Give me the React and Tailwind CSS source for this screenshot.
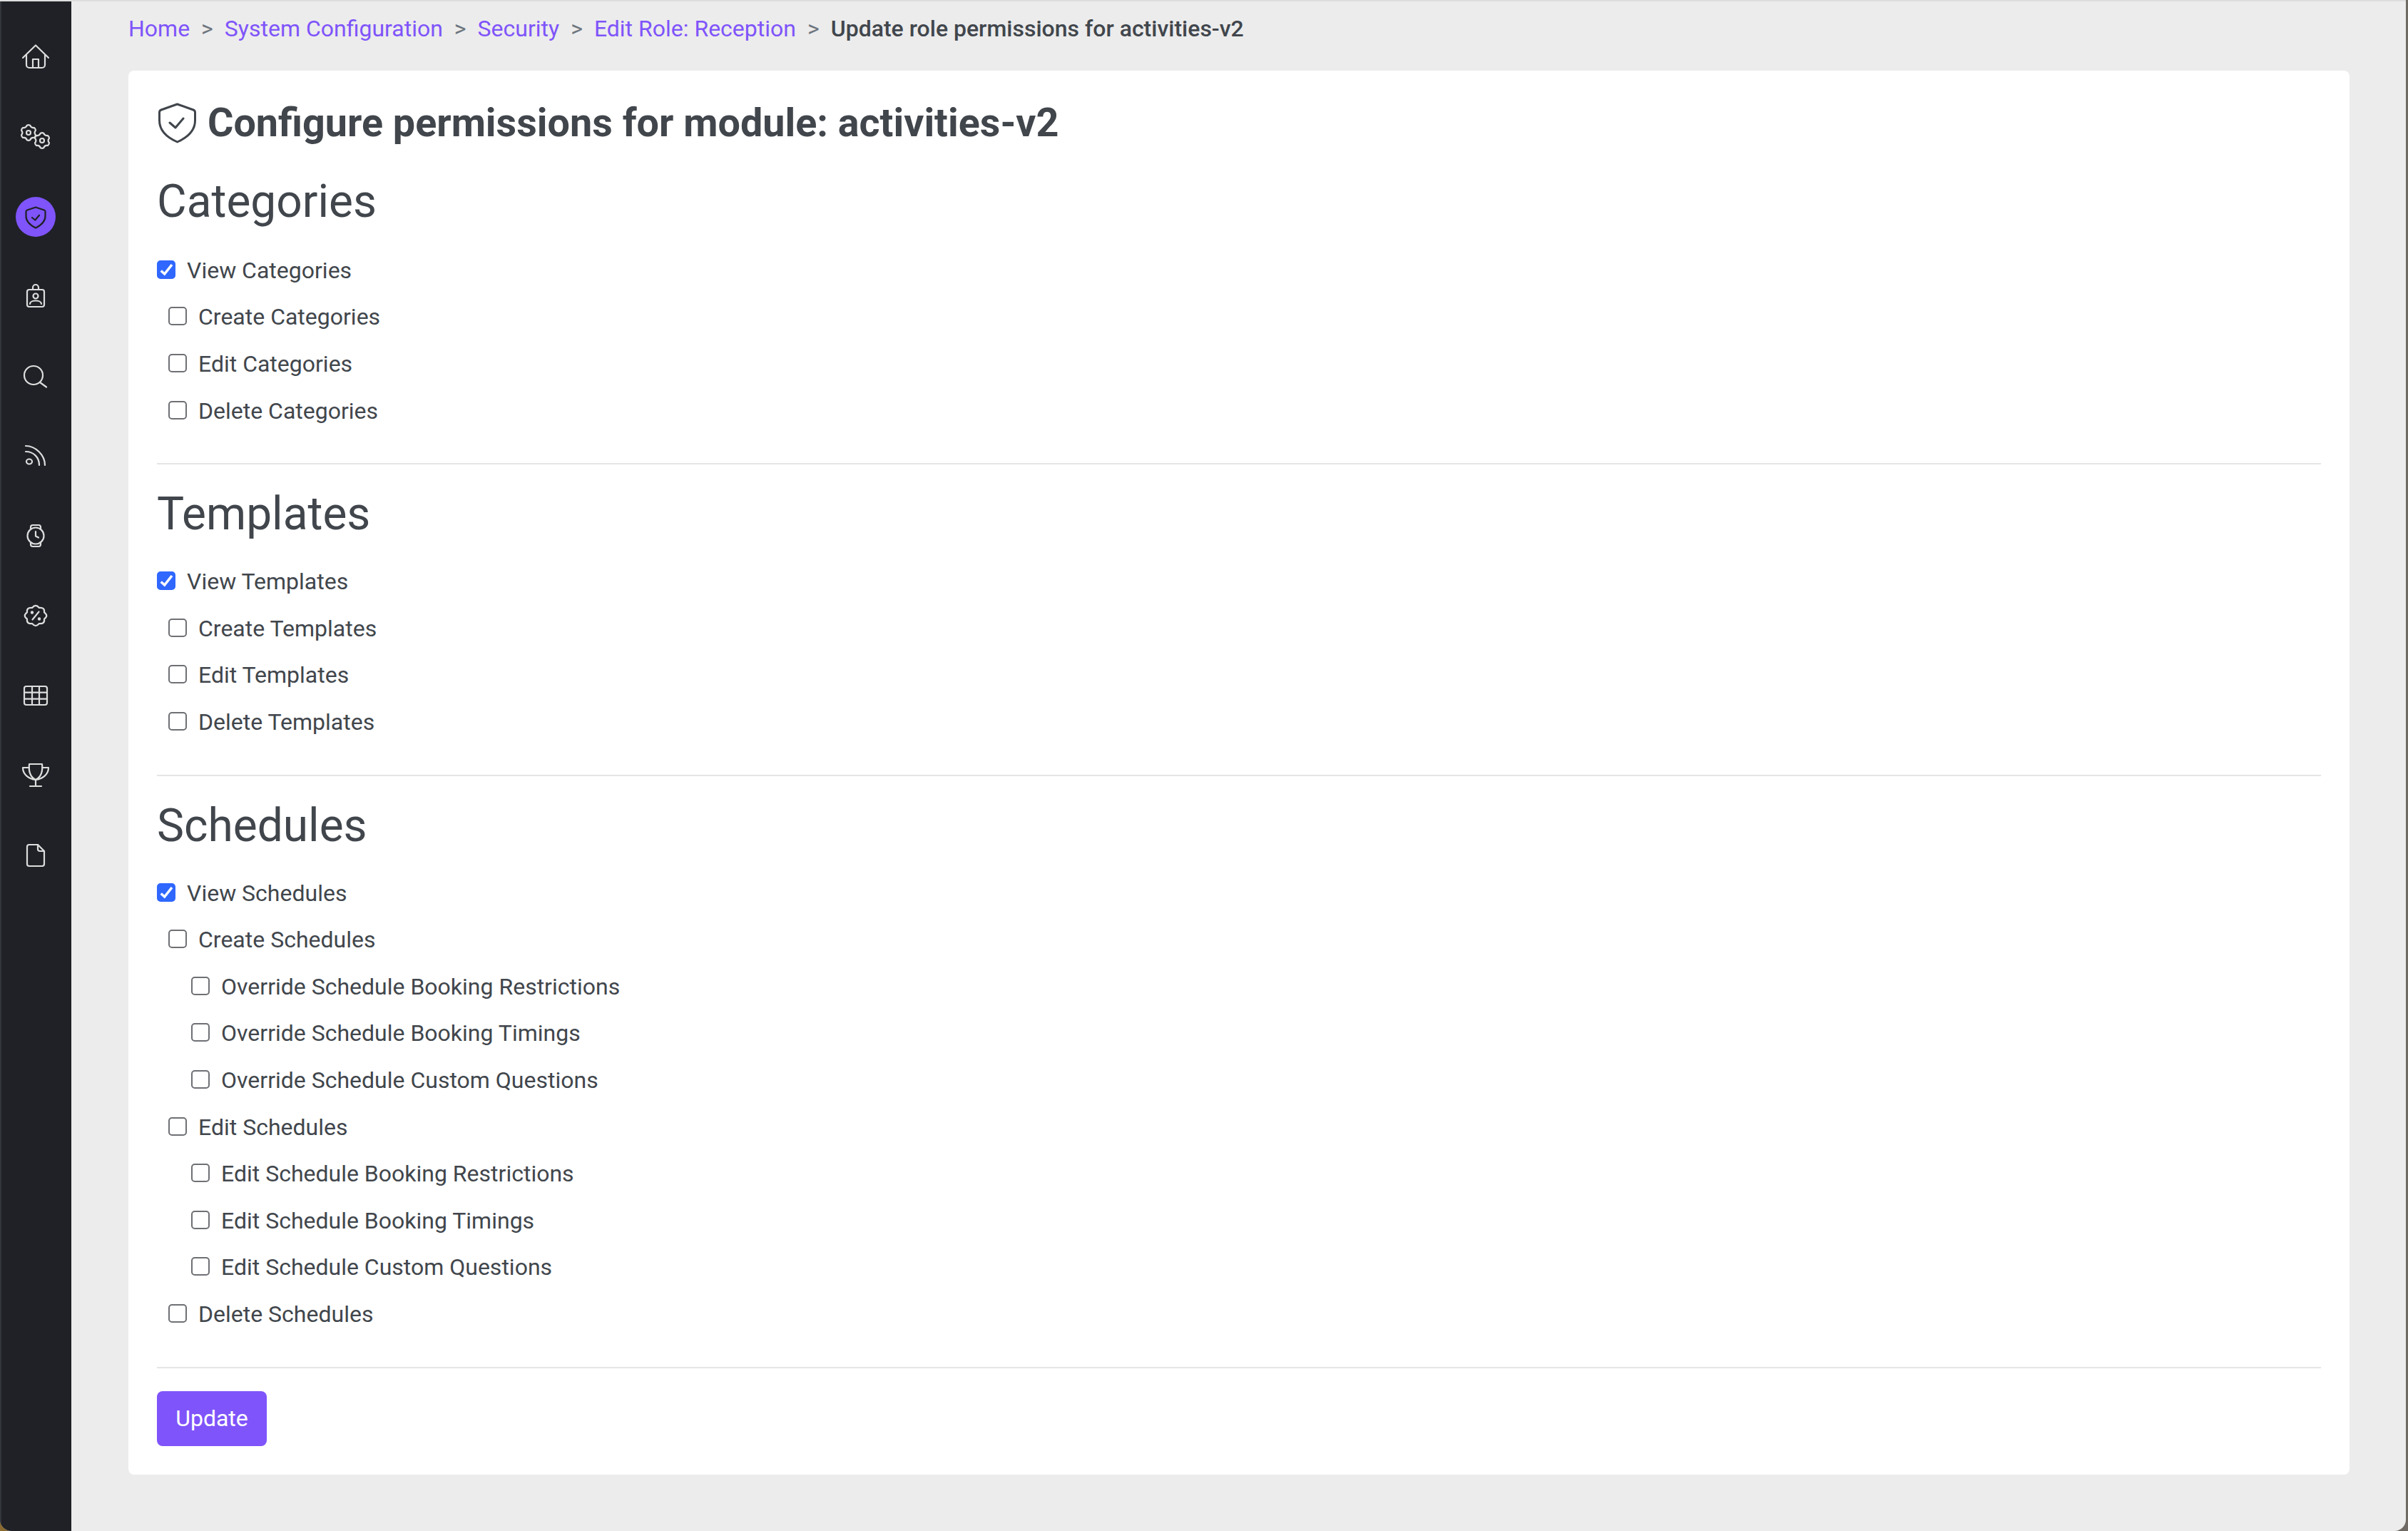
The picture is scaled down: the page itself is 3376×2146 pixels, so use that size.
import React from "react";

const gearPath = (cx, cy, r1, r2, teeth) => {
  const pts = [];
  const step = (Math.PI * 2) / teeth;
  for (let i = 0; i < teeth; i++) {
    const a = i * step - Math.PI / 2;
    const p = (ang, r) => `${(cx + Math.cos(ang) * r).toFixed(2)} ${(cy + Math.sin(ang) * r).toFixed(2)}`;
    pts.push(`${i === 0 ? "M" : "L"}${p(a - step * 0.2, r2)}`);
    pts.push(`Q${p(a, r2 + 0.8)} ${p(a + step * 0.2, r2)}`);
    pts.push(`Q${p(a + step * 0.5, r1 - 0.8)} ${p(a + step * 0.8, r2)}`);
  }
  return pts.join(" ") + " Z";
};

const scallopPath = (cx, cy, r, lobes) => {
  const parts = [];
  const step = (Math.PI * 2) / lobes;
  const p = (ang, rad) => `${(cx + Math.cos(ang) * rad).toFixed(2)} ${(cy + Math.sin(ang) * rad * 0.92).toFixed(2)}`;
  for (let i = 0; i < lobes; i++) {
    const a = i * step - Math.PI / 2 - step / 2;
    if (i === 0) parts.push(`M${p(a, r - 2.5)}`);
    parts.push(`Q${p(a + step / 2, r + 3)} ${p(a + step, r - 2.5)}`);
  }
  return parts.join(" ") + " Z";
};

const ICONS = [
  <>
    <path d="M6 25 L24 7.5 L42 25" />
    <path d="M11 21 V35 a4 4 0 0 0 4 4 H33 a4 4 0 0 0 4 -4 V21" />
    <path d="M20 39 V27 H28 V39" />
  </>,
  <>
    <path d={gearPath(14, 18, 8, 10.5, 6)} />
    <circle cx="14" cy="18" r="3" />
    <path d={gearPath(33, 29, 8, 10.5, 6)} />
    <circle cx="33" cy="29" r="3" />
  </>,
  null,
  <>
    <path d="M20 14 H15 a3 3 0 0 0 -3 3 V35 a3 3 0 0 0 3 3 H33 a3 3 0 0 0 3 -3 V17 a3 3 0 0 0 -3 -3 H28" />
    <path d="M20 14 V11 a4 4 0 0 1 8 0 V14 Z" />
    <circle cx="24" cy="23" r="3.5" />
    <path d="M16 34 C16 28 32 28 32 34" />
  </>,
  <>
    <circle cx="21" cy="22" r="13" />
    <path d="M30 32 L39 38.5" />
  </>,
  <>
    <ellipse cx="15" cy="31" rx="4" ry="3.5" />
    <path d="M10 9 C24 9 37 22 37 36" />
    <path d="M10 17 C21 17 29 25 29 36" />
  </>,
  <>
    <circle cx="24" cy="23" r="11.5" />
    <path d="M17 13 V11 a3 3 0 0 1 3 -3 H28 a3 3 0 0 1 3 3 V13" />
    <path d="M17 33 V35 a3 3 0 0 0 3 3 H28 a3 3 0 0 0 3 -3 V33" />
    <path d="M24 17 V23.5 L28 25.5" />
  </>,
  <>
    <path d={scallopPath(24, 23, 15.5, 8)} />
    <path d="M19.5 28.5 L28.5 17.5" />
    <circle cx="19" cy="18.5" r="1.1" fill="#dddddd" />
    <circle cx="29" cy="27.5" r="1.1" fill="#dddddd" />
  </>,
  <>
    <rect x="8" y="10" width="32" height="26" rx="3" />
    <path d="M19 10 V36 M29 10 V36 M8 18.6 H40 M8 27.6 H40" />
  </>,
  <>
    <path d="M15 7 H33 C34 16 32 25 24 29 C16 25 14 16 15 7 Z" />
    <path d="M15 12 H6 C6 22 15 28 24 29 C33 28 42 22 42 12 H33" />
    <path d="M24 29 V38 M16 38 H32" />
  </>,
  <>
    <path d="M15 8 H27 L36 17 V35 a3 3 0 0 1 -3 3 H15 a3 3 0 0 1 -3 -3 V11 a3 3 0 0 1 3 -3 Z" />
    <path d="M27 8 V14 a3 3 0 0 0 3 3 H36" />
  </>,
];

const BREADCRUMB = ["Home", "System Configuration", "Security", "Edit Role: Reception"];

const SECTIONS = [
  {
    title: "Categories",
    rows: [
      ["View Categories", 0, true],
      ["Create Categories", 1],
      ["Edit Categories", 1],
      ["Delete Categories", 1],
    ],
  },
  {
    title: "Templates",
    rows: [
      ["View Templates", 0, true],
      ["Create Templates", 1],
      ["Edit Templates", 1],
      ["Delete Templates", 1],
    ],
  },
  {
    title: "Schedules",
    rows: [
      ["View Schedules", 0, true],
      ["Create Schedules", 1],
      ["Override Schedule Booking Restrictions", 2],
      ["Override Schedule Booking Timings", 2],
      ["Override Schedule Custom Questions", 2],
      ["Edit Schedules", 1],
      ["Edit Schedule Booking Restrictions", 2],
      ["Edit Schedule Booking Timings", 2],
      ["Edit Schedule Custom Questions", 2],
      ["Delete Schedules", 1],
    ],
  },
];

function Sidebar() {
  return (
    <aside className="w-[100px] shrink-0 bg-[#1f2126] border-l-2 border-[#33363b] flex flex-col items-center pt-[22px]">
      {ICONS.map((icon, i) => (
        <div key={i} className="h-[112px] w-full flex items-center justify-center -ml-[2px]">
          {icon ? (
            <svg width="48" height="48" viewBox="0 0 48 48" fill="none" stroke="#dddddd" strokeWidth="2.2" strokeLinecap="round" strokeLinejoin="round">
              {icon}
            </svg>
          ) : (
            <div className="w-[56px] h-[56px] rounded-full bg-[#7f54fa] flex items-center justify-center">
              <svg width="48" height="48" viewBox="0 0 48 48" fill="none" stroke="#1f2126" strokeWidth="2.2" strokeLinecap="round" strokeLinejoin="round">
                <path d="M24 10.5 L36 14.5 Q37.5 15 37.5 16.5 V23 C37.5 31 31 36 24 39.5 C17 36 10.5 31 10.5 23 V16.5 Q10.5 15 12 14.5 Z" />
                <path d="M19 25 L23.3 28.5 L29 21.7" />
              </svg>
            </div>
          )}
        </div>
      ))}
    </aside>
  );
}

function Row({ label, level, checked }) {
  const indent = level === 0 ? "pl-0" : level === 1 ? "pl-[16px]" : "pl-[48px]";
  return (
    <label className={`h-[65.6px] flex items-center gap-[16px] ${indent}`}>
      <span className="relative w-[26px] h-[26px] shrink-0 -mt-[2px]">
        <input
          type="checkbox"
          defaultChecked={checked}
          className="block appearance-none w-[26px] h-[26px] rounded-[5px] border-2 border-[#6e7074] bg-white checked:bg-[#2f67ff] checked:border-[#2f67ff]"
        />
        {checked && (
          <svg className="absolute inset-0 pointer-events-none" width="26" height="26" viewBox="0 0 26 26" fill="none" stroke="#ffffff" strokeWidth="3.6">
            <path d="M5.7 14.5 L10.7 19 L21 6" />
          </svg>
        )}
      </span>
      <span>{label}</span>
    </label>
  );
}

export default function App() {
  return (
    <div className="w-[3376px] h-[2146px] overflow-hidden bg-gradient-to-r from-[#8a6a2f] to-[#6f6a64] font-['Roboto',sans-serif] text-[32px] leading-[48px] text-[#41464c]">
      <div className="w-[3373px] h-full flex rounded-b-[16px] overflow-hidden border-t-2 border-[#dedede] bg-[#ececec]">
        <Sidebar />
        <main className="flex-1 pl-[80px] pr-[79px] min-w-0">
          <nav className="flex items-center h-[48px] mt-[14px] mb-[35px] font-normal">
            {BREADCRUMB.map((b) => (
              <React.Fragment key={b}>
                <a className="text-[#7f54fa]">{b}</a>
                <span className="px-[16px] text-[#6c757d]">&gt;</span>
              </React.Fragment>
            ))}
            <span className="font-medium">Update role permissions for activities-v2</span>
          </nav>

          <div className="bg-white rounded-[8px] p-[40px]">
            <h1 className="flex items-center gap-[15px] h-[66px] text-[55.7px] leading-[66px] font-bold">
              <svg className="shrink-0" width="56" height="58" viewBox="0 0 56 58" fill="none" stroke="#41464c" strokeWidth="3" strokeLinecap="round" strokeLinejoin="round">
                <path d="M28.5 3 L51 11 Q53.5 12 53.5 14.5 V26 C53.5 40 42 50 28.5 56 C15 50 3.5 40 3.5 26 V14.5 Q3.5 12 6 11 Z" />
                <path d="M18 29 L26 36 L37 23" />
              </svg>
              <span>Configure permissions for module: activities-v2</span>
            </h1>

            {SECTIONS.map((s, i) => (
              <section key={s.title}>
                <h2 className={`text-[64px] leading-[77px] font-normal ${i === 0 ? "mt-[39px] mb-[25px]" : "mb-[23px]"}`}>{s.title}</h2>
                {s.rows.map(([label, level, checked]) => (
                  <Row key={label} label={label} level={level} checked={checked} />
                ))}
                <hr className={`border-0 h-[2px] bg-[#e5e5e5] mt-[41px] ${i === 2 ? "mb-[32px]" : "mb-[31px]"}`} />
              </section>
            ))}

            <button className="block w-[154px] h-[77px] rounded-[8px] bg-[#7f54fa] text-white text-center">Update</button>
          </div>
        </main>
      </div>
    </div>
  );
}
